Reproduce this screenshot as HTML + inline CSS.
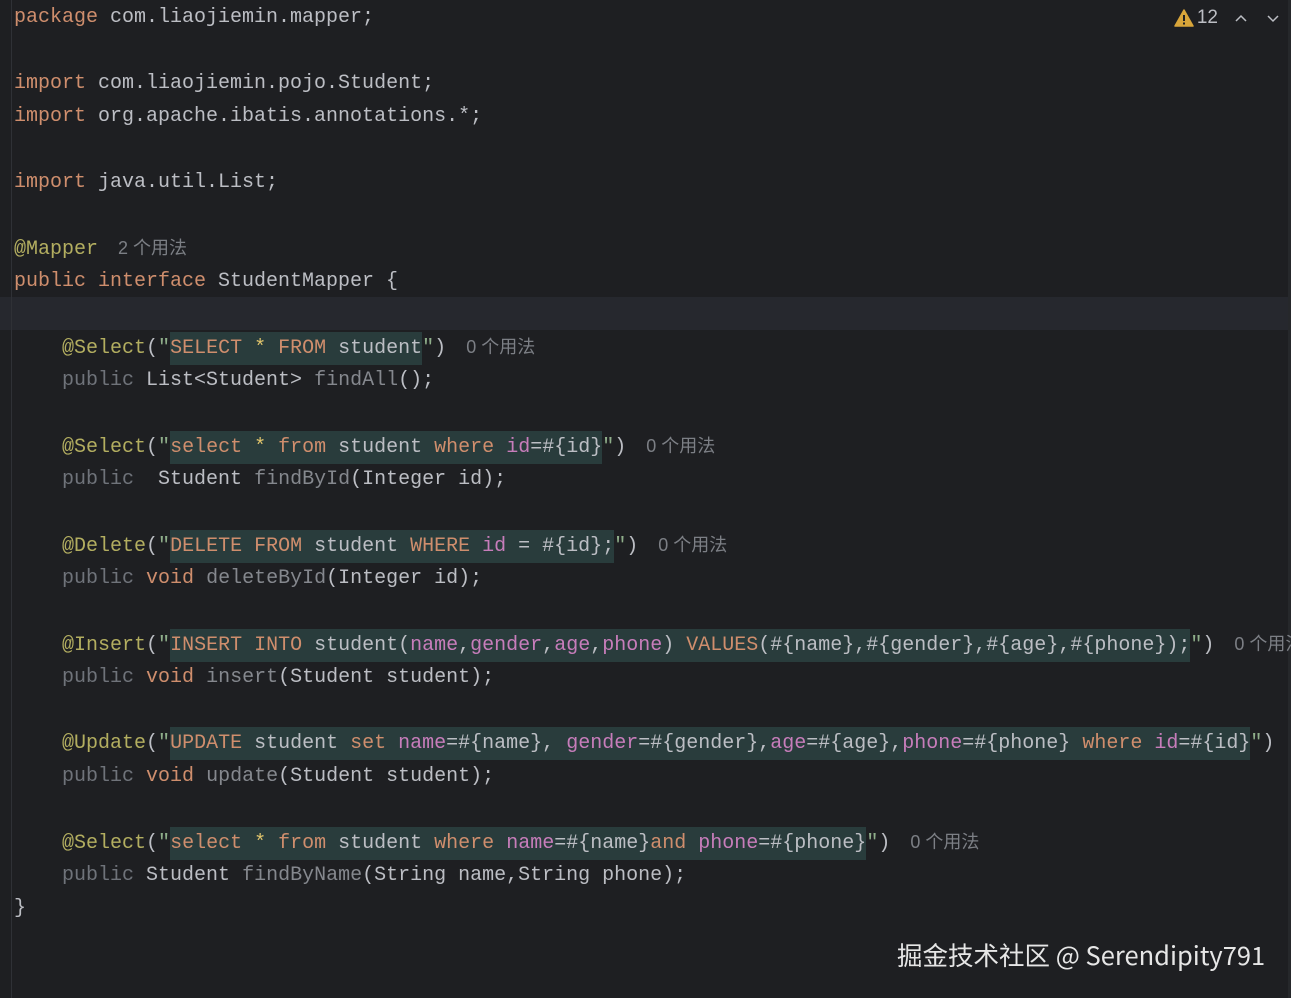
<!DOCTYPE html>
<html><head><meta charset="utf-8"><style>
html,body{margin:0;padding:0;background:#1e1f22;width:1291px;height:998px;overflow:hidden;position:relative}
.gut{position:absolute;left:11px;top:0;width:1px;height:998px;background:#2f3136}
.code{position:absolute;left:14px;top:1px;font-family:"Liberation Mono",monospace;font-size:20px;color:#bcbec4}
.l{height:33px;line-height:33px;position:relative;white-space:pre}
.cur{position:absolute;left:0;top:297px;width:1291px;height:33px;background:#26282e}
.k{color:#cf8e6d}.a{color:#b3ae60}.p{color:#c77dbb}.g{color:#85888e}.u{color:#6f737a}.q{color:#8fae8a}.y{color:#e0c46c}
.s{background:#293c3c;display:inline-block;height:33px}
.h{font-family:"Liberation Sans","Noto Sans CJK SC",sans-serif;font-size:18px;color:#7c7f85;margin-left:20px}
.top{position:absolute;right:11px;top:7px;font-family:"Liberation Sans",sans-serif;font-size:19px;color:#bcbec4;display:flex;align-items:center}
.wm{position:absolute;left:897px;top:936px;font-family:"Noto Sans CJK SC","Liberation Sans",sans-serif;font-size:25.5px;color:#e6e6e6;white-space:nowrap}
.sb{position:absolute;right:0;top:0;width:3px;height:998px;background:#26282b}
</style></head><body>
<div class="cur"></div>
<div class="gut"></div>
<div class="sb"></div>
<div class="code">
<div class="l"><span class="k">package</span> com.liaojiemin.mapper;</div>
<div class="l"> </div>
<div class="l"><span class="k">import</span> com.liaojiemin.pojo.Student;</div>
<div class="l"><span class="k">import</span> org.apache.ibatis.annotations.*;</div>
<div class="l"> </div>
<div class="l"><span class="k">import</span> java.util.List;</div>
<div class="l"> </div>
<div class="l"><span class="a">@Mapper</span><span class="h">2 个用法</span></div>
<div class="l"><span class="k">public interface</span> StudentMapper {</div>
<div class="l"> </div>
<div class="l">    <span class="a">@Select</span>(<span class="q">"</span><span class="s"><span class="k">SELECT</span> <span class="y">*</span> <span class="k">FROM</span> student</span><span class="q">"</span>)<span class="h">0 个用法</span></div>
<div class="l">    <span class="u">public</span> List&lt;Student&gt; <span class="g">findAll</span>();</div>
<div class="l"> </div>
<div class="l">    <span class="a">@Select</span>(<span class="q">"</span><span class="s"><span class="k">select</span> <span class="y">*</span> <span class="k">from</span> student <span class="k">where</span> <span class="p">id</span>=#{id}</span><span class="q">"</span>)<span class="h">0 个用法</span></div>
<div class="l">    <span class="u">public</span>  Student <span class="g">findById</span>(Integer id);</div>
<div class="l"> </div>
<div class="l">    <span class="a">@Delete</span>(<span class="q">"</span><span class="s"><span class="k">DELETE FROM</span> student <span class="k">WHERE</span> <span class="p">id</span> = #{id};</span><span class="q">"</span>)<span class="h">0 个用法</span></div>
<div class="l">    <span class="u">public</span> <span class="k">void</span> <span class="g">deleteById</span>(Integer id);</div>
<div class="l"> </div>
<div class="l">    <span class="a">@Insert</span>(<span class="q">"</span><span class="s"><span class="k">INSERT INTO</span> student(<span class="p">name</span>,<span class="p">gender</span>,<span class="p">age</span>,<span class="p">phone</span>) <span class="k">VALUES</span>(#{name},#{gender},#{age},#{phone});</span><span class="q">"</span>)<span class="h">0 个用法</span></div>
<div class="l">    <span class="u">public</span> <span class="k">void</span> <span class="g">insert</span>(Student student);</div>
<div class="l"> </div>
<div class="l">    <span class="a">@Update</span>(<span class="q">"</span><span class="s"><span class="k">UPDATE</span> student <span class="k">set</span> <span class="p">name</span>=#{name}, <span class="p">gender</span>=#{gender},<span class="p">age</span>=#{age},<span class="p">phone</span>=#{phone} <span class="k">where</span> <span class="p">id</span>=#{id}</span><span class="q">"</span>)</div>
<div class="l">    <span class="u">public</span> <span class="k">void</span> <span class="g">update</span>(Student student);</div>
<div class="l"> </div>
<div class="l">    <span class="a">@Select</span>(<span class="q">"</span><span class="s"><span class="k">select</span> <span class="y">*</span> <span class="k">from</span> student <span class="k">where</span> <span class="p">name</span>=#{name}<span class="k">and</span> <span class="p">phone</span>=#{phone}</span><span class="q">"</span>)<span class="h">0 个用法</span></div>
<div class="l">    <span class="u">public</span> Student <span class="g">findByName</span>(String name,String phone);</div>
<div class="l">}</div>
</div>
<div class="top">
<svg width="20" height="18" viewBox="0 0 20 18"><path d="M10 1 L19 17 L1 17 Z" fill="#d8a53a" stroke="#d8a53a" stroke-linejoin="round" stroke-width="1.5"/><rect x="9" y="6" width="2" height="6" fill="#1e1f22"/><rect x="9" y="13.5" width="2" height="2" fill="#1e1f22"/></svg>
<span style="margin-left:3px">12</span>
<svg style="margin-left:16px" width="14" height="10" viewBox="0 0 14 10"><path d="M2 8 L7 3 L12 8" fill="none" stroke="#bcbec4" stroke-width="1.5"/></svg>
<svg style="margin-left:18px" width="14" height="10" viewBox="0 0 14 10"><path d="M2 3 L7 8 L12 3" fill="none" stroke="#bcbec4" stroke-width="1.5"/></svg>
</div>
<div class="wm">掘金技术社区 @ Serendipity791</div>
</body></html>
